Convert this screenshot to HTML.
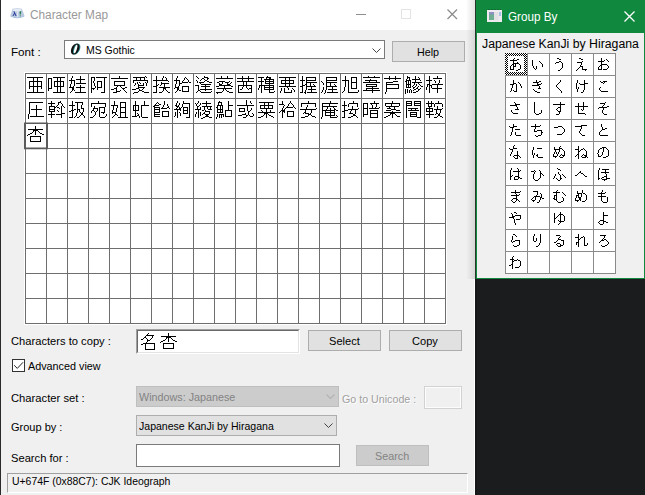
<!DOCTYPE html>
<html><head><meta charset="utf-8"><title>Character Map</title>
<style>
html,body{margin:0;padding:0}
body{width:645px;height:495px;overflow:hidden;background:#1b1c1e;position:relative;font-family:"Liberation Sans",sans-serif;font-size:11px;color:#000}
.abs{position:absolute}
.t{position:absolute;white-space:nowrap;line-height:14px;height:14px}
#main{position:absolute;left:0;top:0;width:475px;height:495px;background:#f0f0f0}
#mtitle{position:absolute;left:0;top:0;width:475px;height:30px;background:#fff}
#lb{position:absolute;left:0;top:0;width:1px;height:495px;background:#2a2a2a}
.btn{position:absolute;box-sizing:border-box;background:#e1e1e1;border:1px solid #adadad}
.btn.dis{background:#cccccc;border-color:#bfbfbf}
.combo{position:absolute;box-sizing:border-box;border:1px solid #7a7a7a;background:#fff}
#gb{position:absolute;left:475px;top:0;width:170px;height:279px;background:#10893e;border-left:1px solid #26382c;box-sizing:border-box}
#gbc{position:absolute;left:1px;top:33px;width:167px;height:245px;background:#f0f0f0}
</style></head><body>
<div id="main">
 <div id="mtitle"></div>
 <div id="lb"></div>
 <div class="abs" style="left:466px;top:0;width:9px;height:279px;background:linear-gradient(to right,rgba(0,0,0,0),rgba(0,0,0,0.11))"></div>
 <div class="abs" style="left:474px;top:279px;width:1px;height:216px;background:#fff"></div>
 <!-- title icon -->
 <svg class="abs" style="left:10px;top:8px" width="15" height="11" viewBox="0 0 15 11"><path d="M2.6 0.8Q7.2 -0.4 11.8 0.8L14.4 7.6Q7.2 11.4 0.4 7.6Z" fill="#b7c8df"/><path d="M3.4 1.2Q7.2 0.2 11 1.2L11.6 3Q7.2 4.2 2.8 3Z" fill="#e4ebf4"/><path d="M0.4 7.6Q7.2 11.4 14.4 7.6L14.2 8.6Q7.2 12 0.6 8.6Z" fill="#8fb0d6"/><path d="M3.4 3.2L4.4 3.2L6.6 8L5.5 8L4.6 6L3.5 8L2.5 8L4.1 4.9Z" fill="#2b3a98"/><path d="M7 3.6H8.2V9H7Z" fill="#dfe7f1"/><path d="M9.6 3.4L11.4 3.2L10.6 6.6L9.8 6.8Z" fill="#1e7a40"/><path d="M9.9 7.4H10.9V8.3H9.9Z" fill="#1e7a40"/></svg>
 <div class="t" style="left:30.05px;top:8px;font-size:12px;color:#999;transform:scaleX(0.9829);transform-origin:0 0;">Character Map</div>
 <!-- caption buttons -->
 <svg class="abs" style="left:356px;top:14px" width="10" height="1"><rect width="10" height="1" fill="#8e8e8e"/></svg>
 <svg class="abs" style="left:401px;top:9px" width="10" height="10"><rect x="0.5" y="0.5" width="9" height="9" fill="none" stroke="#e3e3e3"/></svg>
 <svg class="abs" style="left:447px;top:9px" width="11" height="11" viewBox="0 0 11 11"><path d="M0.5 0.5L10 10M10 0.5L0.5 10" stroke="#8a8a8a" stroke-width="1.2" fill="none"/></svg>

 <div class="t" style="left:10.82px;top:45px;font-size:11px;color:#000;transform:scaleX(1.0585);transform-origin:0 0;">Font :</div>
 <div class="combo" style="left:64px;top:40px;width:321px;height:19px"></div>
 <svg class="abs" style="left:68px;top:42px" width="16" height="14" viewBox="0 0 16 14"><g transform="translate(9.2 0) skewX(-16)"><path d="M-3.1 7a4.0 5.6 0 1 0 8.0 0a4.0 5.6 0 1 0 -8.0 0ZM-0.7999999999999999 7a1.7 4.6 0 1 0 3.4 0a1.7 4.6 0 1 0 -3.4 0Z" fill="#2f8f8f" fill-rule="evenodd"/><path d="M-4.0 7a4.0 5.6 0 1 0 8.0 0a4.0 5.6 0 1 0 -8.0 0ZM-1.7 7a1.7 4.6 0 1 0 3.4 0a1.7 4.6 0 1 0 -3.4 0Z" fill="#111" fill-rule="evenodd"/></g></svg>
 <div class="t" style="left:85.81px;top:43px;font-size:11px;color:#000;transform:scaleX(0.9514);transform-origin:0 0;">MS Gothic</div>
 <svg class="abs" style="left:372px;top:48px" width="9" height="5" viewBox="0 0 9 5"><path d="M0.5 0.5L4.5 4.5L8.5 0.5" stroke="#444" stroke-width="1" fill="none"/></svg>
 <div class="btn" style="left:392px;top:41px;width:73px;height:21px"></div>
 <div class="t" style="left:416.69px;top:45px;font-size:11px;color:#000;transform:scaleX(0.9759);transform-origin:0 0;">Help</div>

<svg class="abs" style="left:25px;top:73px;overflow:visible" width="421" height="251" viewBox="0 0 421 251">
<rect x="-1" y="-1" width="423" height="253" fill="#fff"/>
<path d="M0.5 0V251M21.5 0V251M42.5 0V251M63.5 0V251M84.5 0V251M105.5 0V251M126.5 0V251M147.5 0V251M168.5 0V251M189.5 0V251M210.5 0V251M231.5 0V251M252.5 0V251M273.5 0V251M294.5 0V251M315.5 0V251M336.5 0V251M357.5 0V251M378.5 0V251M399.5 0V251M420.5 0V251M0 0.5H421M0 25.5H421M0 50.5H421M0 75.5H421M0 100.5H421M0 125.5H421M0 150.5H421M0 175.5H421M0 200.5H421M0 225.5H421M0 250.5H421" stroke="#6e6e6e" stroke-width="1" fill="none" shape-rendering="crispEdges"/>
<path d="M-1 49.6H23V76.2H-1Z M1 51V74.6H21V51Z" fill="#5a5a5a" fill-rule="evenodd"/>
<g fill="#000" shape-rendering="crispEdges">
<path d="M2 4h16v1h-16zM8 5h1v1h-1zM12 5h1v1h-1zM8 6h1v1h-1zM12 6h1v1h-1zM8 7h1v1h-1zM12 7h1v1h-1zM4 8h13v1h-13zM4 9h1v1h-1zM8 9h1v1h-1zM12 9h1v1h-1zM16 9h1v1h-1zM4 10h1v1h-1zM8 10h1v1h-1zM12 10h1v1h-1zM16 10h1v1h-1zM4 11h1v1h-1zM8 11h1v1h-1zM12 11h1v1h-1zM16 11h1v1h-1zM4 12h1v1h-1zM8 12h1v1h-1zM12 12h1v1h-1zM16 12h1v1h-1zM4 13h13v1h-13zM4 14h1v1h-1zM8 14h1v1h-1zM12 14h1v1h-1zM16 14h1v1h-1zM4 15h1v1h-1zM8 15h1v1h-1zM12 15h1v1h-1zM16 15h1v1h-1zM8 16h1v1h-1zM12 16h1v1h-1zM8 17h1v1h-1zM12 17h1v1h-1zM8 18h1v1h-1zM12 18h1v1h-1zM2 19h17v1h-17z"/>
<path d="M28 4h12v1h-12zM23 5h4v1h-4zM32 5h1v1h-1zM35 5h1v1h-1zM23 6h1v1h-1zM26 6h1v1h-1zM32 6h1v1h-1zM35 6h1v1h-1zM23 7h1v1h-1zM26 7h1v1h-1zM32 7h1v1h-1zM35 7h1v1h-1zM23 8h1v1h-1zM26 8h1v1h-1zM29 8h10v1h-10zM23 9h1v1h-1zM26 9h1v1h-1zM29 9h1v1h-1zM32 9h1v1h-1zM35 9h1v1h-1zM38 9h1v1h-1zM23 10h1v1h-1zM26 10h1v1h-1zM29 10h1v1h-1zM32 10h1v1h-1zM35 10h1v1h-1zM38 10h1v1h-1zM23 11h1v1h-1zM26 11h1v1h-1zM29 11h1v1h-1zM32 11h1v1h-1zM35 11h1v1h-1zM38 11h1v1h-1zM23 12h1v1h-1zM26 12h1v1h-1zM29 12h1v1h-1zM32 12h1v1h-1zM35 12h1v1h-1zM38 12h1v1h-1zM23 13h1v1h-1zM26 13h1v1h-1zM29 13h10v1h-10zM23 14h1v1h-1zM26 14h1v1h-1zM32 14h1v1h-1zM35 14h1v1h-1zM23 15h4v1h-4zM32 15h1v1h-1zM35 15h1v1h-1zM23 16h1v1h-1zM32 16h1v1h-1zM35 16h1v1h-1zM23 17h1v1h-1zM32 17h1v1h-1zM35 17h1v1h-1zM32 18h1v1h-1zM35 18h1v1h-1zM28 19h12v1h-12z"/>
<path d="M47 3h1v1h-1zM55 3h1v1h-1zM47 4h1v1h-1zM55 4h1v1h-1zM46 5h1v1h-1zM55 5h1v1h-1zM46 6h1v1h-1zM51 6h9v1h-9zM44 7h6v1h-6zM55 7h1v1h-1zM46 8h1v1h-1zM49 8h1v1h-1zM55 8h1v1h-1zM46 9h1v1h-1zM49 9h1v1h-1zM55 9h1v1h-1zM46 10h1v1h-1zM49 10h1v1h-1zM51 10h10v1h-10zM45 11h1v1h-1zM49 11h1v1h-1zM45 12h1v1h-1zM49 12h1v1h-1zM55 12h1v1h-1zM45 13h1v1h-1zM48 13h1v1h-1zM55 13h1v1h-1zM44 14h5v1h-5zM51 14h9v1h-9zM47 15h2v1h-2zM55 15h1v1h-1zM47 16h2v1h-2zM55 16h1v1h-1zM47 17h1v1h-1zM49 17h1v1h-1zM55 17h1v1h-1zM46 18h1v1h-1zM55 18h1v1h-1zM45 19h1v1h-1zM50 19h11v1h-11z"/>
<path d="M66 4h4v1h-4zM71 4h11v1h-11zM66 5h1v1h-1zM69 5h1v1h-1zM79 5h1v1h-1zM66 6h1v1h-1zM69 6h1v1h-1zM79 6h1v1h-1zM66 7h1v1h-1zM69 7h1v1h-1zM79 7h1v1h-1zM66 8h1v1h-1zM68 8h1v1h-1zM72 8h5v1h-5zM79 8h1v1h-1zM66 9h1v1h-1zM68 9h1v1h-1zM72 9h1v1h-1zM76 9h1v1h-1zM79 9h1v1h-1zM66 10h1v1h-1zM69 10h1v1h-1zM72 10h1v1h-1zM76 10h1v1h-1zM79 10h1v1h-1zM66 11h1v1h-1zM69 11h1v1h-1zM72 11h1v1h-1zM76 11h1v1h-1zM79 11h1v1h-1zM66 12h1v1h-1zM69 12h1v1h-1zM72 12h1v1h-1zM76 12h1v1h-1zM79 12h1v1h-1zM66 13h1v1h-1zM70 13h1v1h-1zM72 13h1v1h-1zM76 13h1v1h-1zM79 13h1v1h-1zM66 14h1v1h-1zM70 14h1v1h-1zM72 14h5v1h-5zM79 14h1v1h-1zM66 15h4v1h-4zM72 15h1v1h-1zM79 15h1v1h-1zM66 16h1v1h-1zM68 16h1v1h-1zM72 16h1v1h-1zM79 16h1v1h-1zM66 17h1v1h-1zM79 17h1v1h-1zM66 18h1v1h-1zM79 18h1v1h-1zM66 19h1v1h-1zM76 19h4v1h-4z"/>
<path d="M94 3h1v1h-1zM94 4h1v1h-1zM86 5h17v1h-17zM89 8h11v1h-11zM89 9h1v1h-1zM99 9h1v1h-1zM89 10h1v1h-1zM99 10h1v1h-1zM89 11h1v1h-1zM99 11h1v1h-1zM89 12h11v1h-11zM92 13h1v1h-1zM95 13h1v1h-1zM91 14h1v1h-1zM96 14h1v1h-1zM100 14h2v1h-2zM89 15h3v1h-3zM97 15h3v1h-3zM86 16h3v1h-3zM91 16h1v1h-1zM98 16h1v1h-1zM91 17h1v1h-1zM95 17h1v1h-1zM99 17h1v1h-1zM91 18h4v1h-4zM100 18h1v1h-1zM88 19h4v1h-4zM101 19h1v1h-1z"/>
<path d="M120 3h1v1h-1zM108 4h12v1h-12zM121 4h1v1h-1zM111 5h1v1h-1zM115 5h1v1h-1zM119 5h1v1h-1zM111 6h1v1h-1zM115 6h1v1h-1zM119 6h1v1h-1zM108 7h15v1h-15zM108 8h1v1h-1zM122 8h1v1h-1zM108 9h1v1h-1zM112 9h1v1h-1zM114 9h1v1h-1zM120 9h1v1h-1zM122 9h1v1h-1zM110 10h1v1h-1zM112 10h1v1h-1zM115 10h1v1h-1zM118 10h1v1h-1zM121 10h1v1h-1zM110 11h1v1h-1zM113 11h1v1h-1zM118 11h1v1h-1zM121 11h1v1h-1zM109 12h1v1h-1zM113 12h6v1h-6zM121 12h1v1h-1zM113 13h1v1h-1zM113 14h7v1h-7zM111 15h3v1h-3zM118 15h1v1h-1zM107 16h4v1h-4zM114 16h1v1h-1zM117 16h1v1h-1zM114 17h3v1h-3zM113 18h1v1h-1zM117 18h2v1h-2zM109 19h4v1h-4zM119 19h5v1h-5zM108 20h1v1h-1z"/>
<path d="M131 3h1v1h-1zM138 3h1v1h-1zM131 4h1v1h-1zM138 4h1v1h-1zM140 4h1v1h-1zM131 5h1v1h-1zM137 5h1v1h-1zM141 5h1v1h-1zM131 6h1v1h-1zM137 6h1v1h-1zM141 6h1v1h-1zM128 7h15v1h-15zM131 8h1v1h-1zM143 8h1v1h-1zM131 9h1v1h-1zM136 9h1v1h-1zM131 10h1v1h-1zM136 10h8v1h-8zM131 11h1v1h-1zM133 11h1v1h-1zM136 11h1v1h-1zM139 11h1v1h-1zM131 12h2v1h-2zM135 12h1v1h-1zM139 12h1v1h-1zM128 13h4v1h-4zM139 13h1v1h-1zM131 14h1v1h-1zM134 14h11v1h-11zM131 15h1v1h-1zM138 15h3v1h-3zM131 16h1v1h-1zM138 16h1v1h-1zM140 16h1v1h-1zM131 17h1v1h-1zM138 17h1v1h-1zM141 17h1v1h-1zM131 18h1v1h-1zM137 18h1v1h-1zM142 18h1v1h-1zM128 19h4v1h-4zM134 19h3v1h-3zM143 19h2v1h-2z"/>
<path d="M152 3h1v1h-1zM152 4h1v1h-1zM160 4h1v1h-1zM151 5h1v1h-1zM159 5h1v1h-1zM161 5h1v1h-1zM151 6h1v1h-1zM159 6h1v1h-1zM162 6h1v1h-1zM149 7h6v1h-6zM158 7h1v1h-1zM163 7h1v1h-1zM151 8h1v1h-1zM154 8h1v1h-1zM157 8h1v1h-1zM163 8h1v1h-1zM151 9h1v1h-1zM154 9h1v1h-1zM157 9h6v1h-6zM164 9h2v1h-2zM151 10h1v1h-1zM154 10h3v1h-3zM150 11h1v1h-1zM154 11h1v1h-1zM150 12h1v1h-1zM154 12h1v1h-1zM150 13h1v1h-1zM153 13h1v1h-1zM157 13h7v1h-7zM150 14h4v1h-4zM157 14h1v1h-1zM163 14h1v1h-1zM149 15h1v1h-1zM152 15h2v1h-2zM157 15h1v1h-1zM163 15h1v1h-1zM152 16h2v1h-2zM157 16h1v1h-1zM163 16h1v1h-1zM152 17h1v1h-1zM154 17h2v1h-2zM157 17h1v1h-1zM163 17h1v1h-1zM151 18h1v1h-1zM157 18h7v1h-7zM150 19h1v1h-1z"/>
<path d="M171 3h1v1h-1zM179 3h1v1h-1zM172 4h1v1h-1zM179 4h4v1h-4zM173 5h1v1h-1zM177 5h2v1h-2zM182 5h2v1h-2zM176 6h1v1h-1zM179 6h1v1h-1zM182 6h1v1h-1zM171 7h1v1h-1zM175 7h1v1h-1zM180 7h2v1h-2zM172 8h1v1h-1zM179 8h1v1h-1zM182 8h2v1h-2zM172 9h1v1h-1zM174 9h5v1h-5zM184 9h3v1h-3zM175 10h1v1h-1zM176 11h10v1h-10zM170 12h4v1h-4zM180 12h1v1h-1zM173 13h1v1h-1zM176 13h9v1h-9zM173 14h1v1h-1zM180 14h1v1h-1zM173 15h1v1h-1zM180 15h1v1h-1zM173 16h1v1h-1zM175 16h12v1h-12zM173 17h2v1h-2zM180 17h1v1h-1zM172 18h1v1h-1zM175 18h1v1h-1zM186 18h1v1h-1zM171 19h1v1h-1zM176 19h10v1h-10z"/>
<path d="M196 3h1v1h-1zM202 3h1v1h-1zM196 4h1v1h-1zM202 4h1v1h-1zM191 5h17v1h-17zM194 8h6v1h-6zM204 8h1v1h-1zM192 9h2v1h-2zM197 9h1v1h-1zM200 9h4v1h-4zM206 9h1v1h-1zM194 10h1v1h-1zM197 10h1v1h-1zM202 10h1v1h-1zM205 10h1v1h-1zM194 11h3v1h-3zM202 11h3v1h-3zM194 12h12v1h-12zM191 13h3v1h-3zM199 13h1v1h-1zM206 13h2v1h-2zM199 14h1v1h-1zM192 15h15v1h-15zM198 16h1v1h-1zM200 16h1v1h-1zM198 17h1v1h-1zM201 17h1v1h-1zM197 18h1v1h-1zM202 18h2v1h-2zM191 19h6v1h-6zM204 19h4v1h-4zM192 20h1v1h-1z"/>
<path d="M217 3h1v1h-1zM223 3h1v1h-1zM217 4h1v1h-1zM223 4h1v1h-1zM212 5h17v1h-17zM217 6h1v1h-1zM223 6h1v1h-1zM217 7h1v1h-1zM223 7h1v1h-1zM212 8h17v1h-17zM218 9h1v1h-1zM221 9h1v1h-1zM218 10h1v1h-1zM221 10h1v1h-1zM218 11h1v1h-1zM221 11h1v1h-1zM213 12h14v1h-14zM213 13h1v1h-1zM218 13h1v1h-1zM221 13h1v1h-1zM226 13h1v1h-1zM213 14h1v1h-1zM217 14h1v1h-1zM221 14h1v1h-1zM226 14h1v1h-1zM213 15h1v1h-1zM217 15h1v1h-1zM222 15h1v1h-1zM224 15h3v1h-3zM213 16h1v1h-1zM215 16h2v1h-2zM223 16h1v1h-1zM226 16h1v1h-1zM213 17h1v1h-1zM226 17h1v1h-1zM213 18h1v1h-1zM226 18h1v1h-1zM213 19h14v1h-14z"/>
<path d="M242 3h1v1h-1zM233 4h6v1h-6zM241 4h5v1h-5zM236 5h1v1h-1zM241 5h1v1h-1zM244 5h2v1h-2zM236 6h1v1h-1zM239 6h10v1h-10zM236 7h1v1h-1zM240 7h1v1h-1zM244 7h1v1h-1zM248 7h1v1h-1zM233 8h6v1h-6zM240 8h9v1h-9zM236 9h1v1h-1zM240 9h1v1h-1zM244 9h1v1h-1zM248 9h1v1h-1zM236 10h1v1h-1zM240 10h9v1h-9zM236 11h1v1h-1zM244 11h1v1h-1zM234 12h15v1h-15zM234 13h1v1h-1zM236 13h1v1h-1zM239 13h1v1h-1zM244 13h1v1h-1zM248 13h1v1h-1zM234 14h1v1h-1zM236 14h1v1h-1zM239 14h10v1h-10zM233 15h1v1h-1zM236 15h1v1h-1zM239 15h1v1h-1zM244 15h1v1h-1zM248 15h1v1h-1zM233 16h1v1h-1zM236 16h1v1h-1zM239 16h10v1h-10zM236 17h1v1h-1zM244 17h1v1h-1zM236 18h1v1h-1zM244 18h1v1h-1zM249 18h1v1h-1zM236 19h1v1h-1zM244 19h5v1h-5z"/>
<path d="M254 4h17v1h-17zM260 5h1v1h-1zM264 5h1v1h-1zM260 6h1v1h-1zM264 6h1v1h-1zM256 7h13v1h-13zM256 8h1v1h-1zM260 8h1v1h-1zM264 8h1v1h-1zM268 8h1v1h-1zM256 9h1v1h-1zM260 9h1v1h-1zM264 9h1v1h-1zM268 9h1v1h-1zM256 10h13v1h-13zM260 11h1v1h-1zM264 11h1v1h-1zM260 12h1v1h-1zM264 12h1v1h-1zM254 13h17v1h-17zM262 14h1v1h-1zM256 15h1v1h-1zM259 15h1v1h-1zM263 15h1v1h-1zM267 15h1v1h-1zM256 16h1v1h-1zM259 16h1v1h-1zM263 16h1v1h-1zM268 16h1v1h-1zM256 17h1v1h-1zM259 17h1v1h-1zM266 17h1v1h-1zM269 17h1v1h-1zM255 18h1v1h-1zM259 18h1v1h-1zM266 18h1v1h-1zM269 18h1v1h-1zM255 19h1v1h-1zM259 19h8v1h-8z"/>
<path d="M277 3h1v1h-1zM277 4h1v1h-1zM281 4h10v1h-10zM277 5h1v1h-1zM281 5h1v1h-1zM290 5h1v1h-1zM277 6h1v1h-1zM281 6h1v1h-1zM290 6h1v1h-1zM275 7h5v1h-5zM281 7h10v1h-10zM277 8h1v1h-1zM281 8h1v1h-1zM277 9h1v1h-1zM281 9h11v1h-11zM277 10h1v1h-1zM281 10h1v1h-1zM285 10h1v1h-1zM277 11h1v1h-1zM280 11h2v1h-2zM285 11h1v1h-1zM288 11h1v1h-1zM277 12h3v1h-3zM281 12h1v1h-1zM285 12h1v1h-1zM289 12h1v1h-1zM275 13h3v1h-3zM281 13h10v1h-10zM277 14h1v1h-1zM281 14h1v1h-1zM286 14h1v1h-1zM277 15h1v1h-1zM281 15h1v1h-1zM286 15h1v1h-1zM277 16h1v1h-1zM281 16h1v1h-1zM283 16h8v1h-8zM277 17h1v1h-1zM280 17h1v1h-1zM286 17h1v1h-1zM277 18h1v1h-1zM280 18h1v1h-1zM286 18h1v1h-1zM275 19h3v1h-3zM279 19h2v1h-2zM282 19h10v1h-10zM280 20h1v1h-1z"/>
<path d="M301 4h11v1h-11zM301 5h1v1h-1zM311 5h1v1h-1zM301 6h1v1h-1zM311 6h1v1h-1zM301 7h11v1h-11zM296 8h1v1h-1zM301 8h1v1h-1zM297 9h1v1h-1zM301 9h11v1h-11zM298 10h1v1h-1zM301 10h1v1h-1zM305 10h1v1h-1zM298 11h1v1h-1zM301 11h1v1h-1zM305 11h1v1h-1zM309 11h1v1h-1zM301 12h1v1h-1zM305 12h1v1h-1zM310 12h1v1h-1zM301 13h11v1h-11zM298 14h1v1h-1zM301 14h1v1h-1zM307 14h1v1h-1zM298 15h1v1h-1zM301 15h1v1h-1zM307 15h1v1h-1zM298 16h1v1h-1zM301 16h1v1h-1zM303 16h9v1h-9zM297 17h1v1h-1zM300 17h1v1h-1zM307 17h1v1h-1zM297 18h1v1h-1zM300 18h1v1h-1zM307 18h1v1h-1zM296 19h1v1h-1zM300 19h1v1h-1zM302 19h11v1h-11zM299 20h1v1h-1z"/>
<path d="M320 3h1v1h-1zM320 4h1v1h-1zM326 4h6v1h-6zM320 5h1v1h-1zM326 5h1v1h-1zM331 5h1v1h-1zM320 6h1v1h-1zM326 6h1v1h-1zM331 6h1v1h-1zM317 7h7v1h-7zM326 7h1v1h-1zM331 7h1v1h-1zM320 8h1v1h-1zM323 8h1v1h-1zM326 8h1v1h-1zM331 8h1v1h-1zM320 9h1v1h-1zM323 9h1v1h-1zM326 9h6v1h-6zM320 10h1v1h-1zM323 10h1v1h-1zM326 10h1v1h-1zM331 10h1v1h-1zM320 11h1v1h-1zM323 11h1v1h-1zM326 11h1v1h-1zM331 11h1v1h-1zM320 12h1v1h-1zM323 12h1v1h-1zM326 12h1v1h-1zM331 12h1v1h-1zM320 13h1v1h-1zM323 13h1v1h-1zM326 13h1v1h-1zM331 13h1v1h-1zM319 14h1v1h-1zM323 14h1v1h-1zM326 14h1v1h-1zM331 14h1v1h-1zM319 15h1v1h-1zM323 15h1v1h-1zM326 15h6v1h-6zM319 16h1v1h-1zM323 16h1v1h-1zM319 17h1v1h-1zM323 17h1v1h-1zM333 17h1v1h-1zM318 18h1v1h-1zM323 18h1v1h-1zM333 18h1v1h-1zM317 19h1v1h-1zM323 19h10v1h-10z"/>
<path d="M343 3h1v1h-1zM349 3h1v1h-1zM338 4h17v1h-17zM345 6h1v1h-1zM340 7h12v1h-12zM344 8h1v1h-1zM351 8h1v1h-1zM338 9h17v1h-17zM341 11h11v1h-11zM341 12h1v1h-1zM351 12h1v1h-1zM341 13h11v1h-11zM347 14h1v1h-1zM341 15h13v1h-13zM341 16h1v1h-1zM347 16h1v1h-1zM338 17h17v1h-17zM347 18h1v1h-1zM347 19h1v1h-1z"/>
<path d="M364 3h1v1h-1zM370 3h1v1h-1zM364 4h1v1h-1zM370 4h1v1h-1zM359 5h17v1h-17zM364 6h1v1h-1zM370 6h1v1h-1zM368 8h5v1h-5zM361 9h7v1h-7zM361 10h1v1h-1zM361 11h13v1h-13zM361 12h1v1h-1zM373 12h1v1h-1zM361 13h1v1h-1zM373 13h1v1h-1zM361 14h1v1h-1zM373 14h1v1h-1zM361 15h13v1h-13zM361 16h1v1h-1zM361 17h1v1h-1zM361 18h1v1h-1zM360 19h1v1h-1zM360 20h1v1h-1z"/>
<path d="M382 3h1v1h-1zM390 3h1v1h-1zM382 4h3v1h-3zM390 4h1v1h-1zM393 4h1v1h-1zM382 5h1v1h-1zM384 5h1v1h-1zM390 5h1v1h-1zM394 5h1v1h-1zM381 6h1v1h-1zM384 6h1v1h-1zM387 6h8v1h-8zM381 7h5v1h-5zM390 7h1v1h-1zM395 7h1v1h-1zM380 8h2v1h-2zM383 8h1v1h-1zM385 8h1v1h-1zM390 8h1v1h-1zM381 9h1v1h-1zM383 9h1v1h-1zM385 9h1v1h-1zM387 9h10v1h-10zM381 10h1v1h-1zM383 10h1v1h-1zM385 10h1v1h-1zM389 10h1v1h-1zM393 10h1v1h-1zM381 11h5v1h-5zM389 11h1v1h-1zM391 11h1v1h-1zM394 11h1v1h-1zM381 12h1v1h-1zM383 12h1v1h-1zM385 12h1v1h-1zM388 12h1v1h-1zM391 12h1v1h-1zM395 12h1v1h-1zM381 13h1v1h-1zM383 13h1v1h-1zM385 13h1v1h-1zM387 13h1v1h-1zM390 13h1v1h-1zM393 13h1v1h-1zM396 13h2v1h-2zM381 14h5v1h-5zM388 14h2v1h-2zM392 14h1v1h-1zM388 15h1v1h-1zM391 15h2v1h-2zM395 15h1v1h-1zM380 16h1v1h-1zM382 16h1v1h-1zM385 16h1v1h-1zM389 16h2v1h-2zM393 16h2v1h-2zM380 17h1v1h-1zM382 17h1v1h-1zM384 17h1v1h-1zM386 17h1v1h-1zM388 17h1v1h-1zM393 17h1v1h-1zM380 18h1v1h-1zM382 18h1v1h-1zM384 18h1v1h-1zM386 18h1v1h-1zM391 18h2v1h-2zM380 19h1v1h-1zM382 19h1v1h-1zM384 19h1v1h-1zM386 19h1v1h-1zM388 19h3v1h-3zM380 20h1v1h-1z"/>
<path d="M404 3h1v1h-1zM412 3h1v1h-1zM404 4h1v1h-1zM412 4h1v1h-1zM404 5h1v1h-1zM408 5h9v1h-9zM404 6h1v1h-1zM401 7h6v1h-6zM409 7h1v1h-1zM414 7h1v1h-1zM404 8h1v1h-1zM410 8h1v1h-1zM414 8h1v1h-1zM404 9h1v1h-1zM410 9h1v1h-1zM414 9h1v1h-1zM404 10h1v1h-1zM413 10h1v1h-1zM402 11h3v1h-3zM407 11h11v1h-11zM402 12h1v1h-1zM404 12h3v1h-3zM412 12h1v1h-1zM402 13h1v1h-1zM404 13h1v1h-1zM406 13h1v1h-1zM412 13h1v1h-1zM401 14h1v1h-1zM404 14h1v1h-1zM406 14h1v1h-1zM412 14h1v1h-1zM401 15h1v1h-1zM404 15h1v1h-1zM407 15h10v1h-10zM401 16h1v1h-1zM404 16h1v1h-1zM412 16h1v1h-1zM404 17h1v1h-1zM412 17h1v1h-1zM404 18h1v1h-1zM412 18h1v1h-1zM404 19h1v1h-1zM412 19h1v1h-1z"/>
<path d="M4 29h14v1h-14zM4 30h1v1h-1zM4 31h1v1h-1zM4 32h1v1h-1zM11 32h1v1h-1zM4 33h1v1h-1zM11 33h1v1h-1zM4 34h1v1h-1zM11 34h1v1h-1zM4 35h1v1h-1zM11 35h1v1h-1zM4 36h1v1h-1zM6 36h11v1h-11zM4 37h1v1h-1zM11 37h1v1h-1zM4 38h1v1h-1zM11 38h1v1h-1zM4 39h1v1h-1zM11 39h1v1h-1zM4 40h1v1h-1zM11 40h1v1h-1zM3 41h1v1h-1zM11 41h1v1h-1zM3 42h1v1h-1zM11 42h1v1h-1zM3 43h1v1h-1zM5 43h14v1h-14zM3 44h1v1h-1zM3 45h1v1h-1z"/>
<path d="M26 28h1v1h-1zM35 28h1v1h-1zM26 29h1v1h-1zM33 29h3v1h-3zM23 30h7v1h-7zM33 30h1v1h-1zM36 30h1v1h-1zM26 31h1v1h-1zM33 31h1v1h-1zM37 31h1v1h-1zM26 32h1v1h-1zM32 32h1v1h-1zM37 32h1v1h-1zM24 33h6v1h-6zM31 33h1v1h-1zM36 33h1v1h-1zM38 33h1v1h-1zM24 34h1v1h-1zM29 34h2v1h-2zM32 34h2v1h-2zM36 34h1v1h-1zM39 34h1v1h-1zM24 35h1v1h-1zM29 35h1v1h-1zM34 35h1v1h-1zM36 35h1v1h-1zM24 36h6v1h-6zM36 36h1v1h-1zM24 37h1v1h-1zM29 37h1v1h-1zM32 37h1v1h-1zM36 37h1v1h-1zM24 38h6v1h-6zM33 38h1v1h-1zM36 38h1v1h-1zM26 39h1v1h-1zM36 39h1v1h-1zM26 40h1v1h-1zM36 40h4v1h-4zM23 41h7v1h-7zM31 41h6v1h-6zM26 42h1v1h-1zM36 42h1v1h-1zM26 43h1v1h-1zM36 43h1v1h-1zM26 44h1v1h-1zM36 44h1v1h-1z"/>
<path d="M47 28h1v1h-1zM47 29h1v1h-1zM50 29h8v1h-8zM47 30h1v1h-1zM52 30h1v1h-1zM57 30h1v1h-1zM47 31h1v1h-1zM52 31h1v1h-1zM57 31h1v1h-1zM44 32h6v1h-6zM52 32h1v1h-1zM56 32h1v1h-1zM47 33h1v1h-1zM52 33h1v1h-1zM56 33h1v1h-1zM47 34h1v1h-1zM52 34h1v1h-1zM56 34h1v1h-1zM47 35h1v1h-1zM52 35h1v1h-1zM56 35h3v1h-3zM47 36h1v1h-1zM49 36h2v1h-2zM52 36h3v1h-3zM58 36h1v1h-1zM46 37h3v1h-3zM52 37h1v1h-1zM54 37h1v1h-1zM58 37h1v1h-1zM44 38h2v1h-2zM47 38h1v1h-1zM52 38h1v1h-1zM54 38h1v1h-1zM58 38h1v1h-1zM47 39h1v1h-1zM52 39h1v1h-1zM55 39h1v1h-1zM57 39h1v1h-1zM47 40h1v1h-1zM51 40h1v1h-1zM56 40h2v1h-2zM47 41h1v1h-1zM51 41h1v1h-1zM56 41h2v1h-2zM47 42h1v1h-1zM51 42h1v1h-1zM55 42h1v1h-1zM58 42h1v1h-1zM47 43h1v1h-1zM50 43h1v1h-1zM54 43h1v1h-1zM59 43h1v1h-1zM44 44h4v1h-4zM49 44h1v1h-1zM52 44h2v1h-2zM59 44h1v1h-1z"/>
<path d="M73 28h1v1h-1zM73 29h1v1h-1zM66 30h15v1h-15zM66 31h1v1h-1zM80 31h1v1h-1zM66 32h1v1h-1zM80 32h1v1h-1zM66 33h1v1h-1zM69 33h1v1h-1zM80 33h1v1h-1zM69 34h1v1h-1zM74 34h6v1h-6zM68 35h5v1h-5zM74 35h1v1h-1zM79 35h1v1h-1zM68 36h1v1h-1zM72 36h1v1h-1zM74 36h1v1h-1zM79 36h1v1h-1zM67 37h2v1h-2zM72 37h1v1h-1zM74 37h1v1h-1zM79 37h1v1h-1zM66 38h1v1h-1zM69 38h1v1h-1zM71 38h1v1h-1zM74 38h1v1h-1zM79 38h1v1h-1zM66 39h1v1h-1zM70 39h1v1h-1zM74 39h1v1h-1zM76 39h4v1h-4zM70 40h1v1h-1zM74 40h1v1h-1zM78 40h1v1h-1zM70 41h1v1h-1zM74 41h1v1h-1zM81 41h1v1h-1zM69 42h1v1h-1zM74 42h1v1h-1zM81 42h1v1h-1zM68 43h1v1h-1zM74 43h1v1h-1zM80 43h1v1h-1zM65 44h3v1h-3zM75 44h5v1h-5z"/>
<path d="M89 28h1v1h-1zM89 29h1v1h-1zM95 29h6v1h-6zM89 30h1v1h-1zM95 30h1v1h-1zM100 30h1v1h-1zM89 31h1v1h-1zM95 31h1v1h-1zM100 31h1v1h-1zM86 32h7v1h-7zM95 32h1v1h-1zM100 32h1v1h-1zM88 33h1v1h-1zM92 33h1v1h-1zM95 33h1v1h-1zM100 33h1v1h-1zM88 34h1v1h-1zM92 34h1v1h-1zM95 34h6v1h-6zM88 35h1v1h-1zM91 35h1v1h-1zM95 35h1v1h-1zM100 35h1v1h-1zM88 36h1v1h-1zM91 36h1v1h-1zM95 36h1v1h-1zM100 36h1v1h-1zM87 37h1v1h-1zM91 37h1v1h-1zM95 37h1v1h-1zM100 37h1v1h-1zM87 38h1v1h-1zM91 38h1v1h-1zM95 38h1v1h-1zM100 38h1v1h-1zM87 39h4v1h-4zM95 39h6v1h-6zM87 40h1v1h-1zM90 40h1v1h-1zM95 40h1v1h-1zM100 40h1v1h-1zM90 41h2v1h-2zM95 41h1v1h-1zM100 41h1v1h-1zM89 42h1v1h-1zM92 42h1v1h-1zM95 42h1v1h-1zM100 42h1v1h-1zM88 43h1v1h-1zM95 43h1v1h-1zM100 43h1v1h-1zM87 44h1v1h-1zM93 44h10v1h-10z"/>
<path d="M110 28h1v1h-1zM119 28h1v1h-1zM110 29h1v1h-1zM119 29h1v1h-1zM110 30h1v1h-1zM119 30h1v1h-1zM110 31h1v1h-1zM119 31h1v1h-1zM108 32h6v1h-6zM116 32h8v1h-8zM108 33h1v1h-1zM110 33h1v1h-1zM113 33h1v1h-1zM116 33h1v1h-1zM108 34h1v1h-1zM110 34h1v1h-1zM113 34h1v1h-1zM116 34h1v1h-1zM108 35h1v1h-1zM110 35h1v1h-1zM113 35h1v1h-1zM116 35h1v1h-1zM108 36h1v1h-1zM110 36h1v1h-1zM113 36h1v1h-1zM116 36h1v1h-1zM108 37h6v1h-6zM116 37h1v1h-1zM110 38h1v1h-1zM116 38h1v1h-1zM110 39h1v1h-1zM116 39h1v1h-1zM110 40h1v1h-1zM112 40h1v1h-1zM116 40h1v1h-1zM110 41h1v1h-1zM113 41h1v1h-1zM116 41h1v1h-1zM110 42h1v1h-1zM112 42h2v1h-2zM116 42h1v1h-1zM107 43h5v1h-5zM114 43h1v1h-1zM116 43h1v1h-1zM114 44h1v1h-1zM117 44h6v1h-6z"/>
<path d="M139 28h1v1h-1zM132 29h1v1h-1zM139 29h1v1h-1zM131 30h1v1h-1zM133 30h1v1h-1zM139 30h1v1h-1zM130 31h1v1h-1zM134 31h2v1h-2zM139 31h1v1h-1zM142 31h1v1h-1zM129 32h5v1h-5zM138 32h1v1h-1zM142 32h1v1h-1zM128 33h2v1h-2zM138 33h1v1h-1zM143 33h1v1h-1zM129 34h6v1h-6zM137 34h1v1h-1zM142 34h2v1h-2zM129 35h1v1h-1zM134 35h1v1h-1zM136 35h6v1h-6zM144 35h1v1h-1zM129 36h6v1h-6zM129 37h1v1h-1zM134 37h1v1h-1zM129 38h1v1h-1zM134 38h1v1h-1zM137 38h7v1h-7zM129 39h6v1h-6zM137 39h1v1h-1zM143 39h1v1h-1zM129 40h1v1h-1zM137 40h1v1h-1zM143 40h1v1h-1zM129 41h6v1h-6zM137 41h1v1h-1zM143 41h1v1h-1zM129 42h1v1h-1zM137 42h1v1h-1zM143 42h1v1h-1zM129 43h6v1h-6zM137 43h7v1h-7z"/>
<path d="M152 28h1v1h-1zM158 28h1v1h-1zM152 29h1v1h-1zM158 29h1v1h-1zM151 30h1v1h-1zM154 30h1v1h-1zM158 30h7v1h-7zM151 31h1v1h-1zM154 31h1v1h-1zM157 31h1v1h-1zM164 31h1v1h-1zM150 32h2v1h-2zM153 32h1v1h-1zM157 32h1v1h-1zM164 32h1v1h-1zM151 33h3v1h-3zM157 33h1v1h-1zM164 33h1v1h-1zM152 34h1v1h-1zM154 34h1v1h-1zM156 34h1v1h-1zM158 34h5v1h-5zM164 34h1v1h-1zM151 35h1v1h-1zM154 35h2v1h-2zM158 35h1v1h-1zM162 35h1v1h-1zM164 35h1v1h-1zM149 36h7v1h-7zM158 36h1v1h-1zM162 36h1v1h-1zM164 36h1v1h-1zM152 37h1v1h-1zM155 37h1v1h-1zM158 37h5v1h-5zM164 37h1v1h-1zM152 38h1v1h-1zM158 38h1v1h-1zM162 38h1v1h-1zM164 38h1v1h-1zM150 39h1v1h-1zM152 39h1v1h-1zM154 39h1v1h-1zM158 39h1v1h-1zM162 39h1v1h-1zM164 39h1v1h-1zM150 40h1v1h-1zM152 40h1v1h-1zM155 40h1v1h-1zM158 40h5v1h-5zM164 40h1v1h-1zM150 41h1v1h-1zM152 41h1v1h-1zM155 41h1v1h-1zM164 41h1v1h-1zM150 42h1v1h-1zM152 42h1v1h-1zM155 42h1v1h-1zM164 42h1v1h-1zM149 43h1v1h-1zM152 43h1v1h-1zM164 43h1v1h-1zM152 44h1v1h-1zM161 44h4v1h-4z"/>
<path d="M173 28h1v1h-1zM181 28h1v1h-1zM173 29h1v1h-1zM181 29h1v1h-1zM170 30h1v1h-1zM172 30h1v1h-1zM175 30h1v1h-1zM177 30h9v1h-9zM171 31h1v1h-1zM175 31h1v1h-1zM181 31h1v1h-1zM171 32h1v1h-1zM174 32h1v1h-1zM181 32h1v1h-1zM172 33h2v1h-2zM177 33h10v1h-10zM172 34h1v1h-1zM175 34h1v1h-1zM179 34h1v1h-1zM182 34h1v1h-1zM185 34h1v1h-1zM172 35h1v1h-1zM175 35h1v1h-1zM179 35h1v1h-1zM182 35h1v1h-1zM185 35h1v1h-1zM170 36h6v1h-6zM179 36h1v1h-1zM183 36h4v1h-4zM173 37h1v1h-1zM177 37h2v1h-2zM180 37h1v1h-1zM173 38h1v1h-1zM180 38h5v1h-5zM171 39h1v1h-1zM173 39h1v1h-1zM175 39h1v1h-1zM179 39h1v1h-1zM184 39h1v1h-1zM171 40h1v1h-1zM173 40h1v1h-1zM175 40h1v1h-1zM178 40h2v1h-2zM184 40h1v1h-1zM170 41h1v1h-1zM173 41h1v1h-1zM175 41h1v1h-1zM177 41h1v1h-1zM180 41h4v1h-4zM170 42h1v1h-1zM173 42h1v1h-1zM175 42h1v1h-1zM181 42h2v1h-2zM170 43h1v1h-1zM173 43h1v1h-1zM180 43h4v1h-4zM173 44h1v1h-1zM178 44h2v1h-2zM184 44h3v1h-3zM176 45h2v1h-2z"/>
<path d="M194 28h1v1h-1zM203 28h1v1h-1zM193 29h4v1h-4zM203 29h1v1h-1zM193 30h1v1h-1zM196 30h1v1h-1zM203 30h1v1h-1zM193 31h1v1h-1zM196 31h1v1h-1zM203 31h1v1h-1zM192 32h6v1h-6zM203 32h5v1h-5zM192 33h1v1h-1zM195 33h1v1h-1zM197 33h1v1h-1zM203 33h1v1h-1zM191 34h2v1h-2zM195 34h1v1h-1zM197 34h1v1h-1zM203 34h1v1h-1zM192 35h1v1h-1zM195 35h1v1h-1zM197 35h1v1h-1zM203 35h1v1h-1zM192 36h6v1h-6zM203 36h1v1h-1zM192 37h1v1h-1zM195 37h1v1h-1zM197 37h1v1h-1zM200 37h7v1h-7zM192 38h1v1h-1zM195 38h1v1h-1zM197 38h1v1h-1zM200 38h1v1h-1zM206 38h1v1h-1zM192 39h6v1h-6zM200 39h1v1h-1zM206 39h1v1h-1zM200 40h1v1h-1zM206 40h1v1h-1zM192 41h1v1h-1zM194 41h5v1h-5zM200 41h1v1h-1zM206 41h1v1h-1zM192 42h1v1h-1zM194 42h1v1h-1zM196 42h1v1h-1zM198 42h1v1h-1zM200 42h1v1h-1zM206 42h1v1h-1zM192 43h1v1h-1zM194 43h1v1h-1zM196 43h1v1h-1zM198 43h1v1h-1zM200 43h7v1h-7zM191 44h1v1h-1zM194 44h1v1h-1zM196 44h1v1h-1zM191 45h1v1h-1z"/>
<path d="M221 27h1v1h-1zM221 28h1v1h-1zM225 28h1v1h-1zM221 29h1v1h-1zM225 29h1v1h-1zM221 30h1v1h-1zM226 30h1v1h-1zM221 31h1v1h-1zM212 32h17v1h-17zM222 33h1v1h-1zM222 34h1v1h-1zM214 35h6v1h-6zM222 35h1v1h-1zM226 35h1v1h-1zM214 36h1v1h-1zM219 36h1v1h-1zM222 36h1v1h-1zM226 36h1v1h-1zM214 37h1v1h-1zM219 37h1v1h-1zM222 37h1v1h-1zM225 37h1v1h-1zM214 38h6v1h-6zM223 38h2v1h-2zM223 39h1v1h-1zM220 40h1v1h-1zM223 40h1v1h-1zM227 40h1v1h-1zM217 41h4v1h-4zM223 41h1v1h-1zM228 41h1v1h-1zM213 42h4v1h-4zM221 42h2v1h-2zM224 42h1v1h-1zM228 42h1v1h-1zM221 43h1v1h-1zM225 43h3v1h-3zM218 44h3v1h-3z"/>
<path d="M234 29h15v1h-15zM239 30h1v1h-1zM243 30h1v1h-1zM239 31h1v1h-1zM243 31h1v1h-1zM235 32h13v1h-13zM235 33h1v1h-1zM239 33h1v1h-1zM243 33h1v1h-1zM247 33h1v1h-1zM235 34h1v1h-1zM239 34h1v1h-1zM243 34h1v1h-1zM247 34h1v1h-1zM235 35h13v1h-13zM241 36h1v1h-1zM236 37h1v1h-1zM241 37h1v1h-1zM245 37h1v1h-1zM237 38h1v1h-1zM241 38h1v1h-1zM245 38h1v1h-1zM233 39h17v1h-17zM239 40h4v1h-4zM239 41h1v1h-1zM241 41h1v1h-1zM243 41h1v1h-1zM238 42h1v1h-1zM241 42h1v1h-1zM244 42h2v1h-2zM236 43h2v1h-2zM241 43h1v1h-1zM246 43h2v1h-2zM233 44h3v1h-3zM241 44h1v1h-1zM248 44h1v1h-1z"/>
<path d="M257 28h1v1h-1zM265 28h1v1h-1zM257 29h1v1h-1zM265 29h1v1h-1zM257 30h1v1h-1zM264 30h1v1h-1zM266 30h1v1h-1zM254 31h5v1h-5zM263 31h1v1h-1zM267 31h1v1h-1zM259 32h1v1h-1zM263 32h1v1h-1zM268 32h1v1h-1zM258 33h1v1h-1zM262 33h1v1h-1zM268 33h1v1h-1zM258 34h1v1h-1zM261 34h7v1h-7zM269 34h1v1h-1zM257 35h1v1h-1zM260 35h1v1h-1zM270 35h1v1h-1zM257 36h1v1h-1zM259 36h1v1h-1zM256 37h4v1h-4zM255 38h1v1h-1zM257 38h3v1h-3zM262 38h7v1h-7zM254 39h1v1h-1zM257 39h1v1h-1zM259 39h1v1h-1zM262 39h1v1h-1zM268 39h1v1h-1zM257 40h1v1h-1zM262 40h1v1h-1zM268 40h1v1h-1zM257 41h1v1h-1zM262 41h1v1h-1zM268 41h1v1h-1zM257 42h1v1h-1zM262 42h1v1h-1zM268 42h1v1h-1zM257 43h1v1h-1zM262 43h7v1h-7zM257 44h1v1h-1z"/>
<path d="M283 28h1v1h-1zM283 29h1v1h-1zM276 30h15v1h-15zM276 31h1v1h-1zM290 31h1v1h-1zM276 32h1v1h-1zM282 32h1v1h-1zM290 32h1v1h-1zM276 33h1v1h-1zM282 33h1v1h-1zM290 33h1v1h-1zM281 34h1v1h-1zM281 35h1v1h-1zM291 35h1v1h-1zM275 36h16v1h-16zM280 37h1v1h-1zM286 37h1v1h-1zM280 38h1v1h-1zM286 38h1v1h-1zM279 39h2v1h-2zM286 39h1v1h-1zM278 40h1v1h-1zM280 40h4v1h-4zM285 40h1v1h-1zM283 41h3v1h-3zM283 42h1v1h-1zM286 42h1v1h-1zM280 43h3v1h-3zM287 43h3v1h-3zM276 44h4v1h-4zM290 44h1v1h-1z"/>
<path d="M305 28h1v1h-1zM305 29h1v1h-1zM297 30h16v1h-16zM297 31h1v1h-1zM304 31h1v1h-1zM297 32h1v1h-1zM304 32h1v1h-1zM297 33h15v1h-15zM297 34h1v1h-1zM302 34h1v1h-1zM308 34h1v1h-1zM297 35h1v1h-1zM302 35h1v1h-1zM305 35h1v1h-1zM309 35h1v1h-1zM297 36h1v1h-1zM301 36h1v1h-1zM305 36h1v1h-1zM309 36h2v1h-2zM297 37h13v1h-13zM311 37h2v1h-2zM297 38h1v1h-1zM300 38h1v1h-1zM305 38h1v1h-1zM309 38h1v1h-1zM297 39h1v1h-1zM300 39h10v1h-10zM297 40h1v1h-1zM300 40h1v1h-1zM305 40h1v1h-1zM309 40h1v1h-1zM297 41h1v1h-1zM300 41h1v1h-1zM305 41h1v1h-1zM309 41h1v1h-1zM297 42h1v1h-1zM300 42h10v1h-10zM311 42h1v1h-1zM297 43h1v1h-1zM305 43h1v1h-1zM312 43h1v1h-1zM296 44h1v1h-1zM305 44h7v1h-7zM296 45h1v1h-1z"/>
<path d="M319 28h1v1h-1zM328 28h1v1h-1zM319 29h1v1h-1zM328 29h1v1h-1zM319 30h1v1h-1zM324 30h9v1h-9zM319 31h1v1h-1zM323 31h1v1h-1zM332 31h1v1h-1zM317 32h5v1h-5zM323 32h1v1h-1zM332 32h1v1h-1zM319 33h1v1h-1zM323 33h1v1h-1zM327 33h1v1h-1zM332 33h1v1h-1zM319 34h1v1h-1zM327 34h1v1h-1zM319 35h1v1h-1zM327 35h1v1h-1zM333 35h1v1h-1zM319 36h1v1h-1zM323 36h10v1h-10zM319 37h4v1h-4zM326 37h1v1h-1zM330 37h1v1h-1zM317 38h3v1h-3zM325 38h1v1h-1zM330 38h1v1h-1zM319 39h1v1h-1zM325 39h1v1h-1zM330 39h1v1h-1zM319 40h1v1h-1zM324 40h4v1h-4zM330 40h1v1h-1zM319 41h1v1h-1zM328 41h2v1h-2zM319 42h1v1h-1zM328 42h3v1h-3zM319 43h1v1h-1zM326 43h2v1h-2zM331 43h1v1h-1zM317 44h3v1h-3zM323 44h3v1h-3zM332 44h1v1h-1z"/>
<path d="M349 28h1v1h-1zM349 29h1v1h-1zM338 30h5v1h-5zM345 30h9v1h-9zM338 31h1v1h-1zM342 31h1v1h-1zM346 31h1v1h-1zM351 31h1v1h-1zM338 32h1v1h-1zM342 32h1v1h-1zM347 32h1v1h-1zM351 32h1v1h-1zM338 33h1v1h-1zM342 33h1v1h-1zM347 33h1v1h-1zM351 33h1v1h-1zM338 34h1v1h-1zM342 34h1v1h-1zM347 34h1v1h-1zM350 34h1v1h-1zM354 34h1v1h-1zM338 35h5v1h-5zM344 35h10v1h-10zM338 36h1v1h-1zM342 36h1v1h-1zM338 37h1v1h-1zM342 37h1v1h-1zM345 37h8v1h-8zM338 38h1v1h-1zM342 38h1v1h-1zM345 38h1v1h-1zM352 38h1v1h-1zM338 39h1v1h-1zM342 39h1v1h-1zM345 39h1v1h-1zM352 39h1v1h-1zM338 40h1v1h-1zM342 40h1v1h-1zM345 40h8v1h-8zM338 41h5v1h-5zM345 41h1v1h-1zM352 41h1v1h-1zM338 42h1v1h-1zM345 42h1v1h-1zM352 42h1v1h-1zM338 43h1v1h-1zM345 43h1v1h-1zM352 43h1v1h-1zM345 44h8v1h-8z"/>
<path d="M367 28h1v1h-1zM367 29h1v1h-1zM360 30h15v1h-15zM360 31h1v1h-1zM366 31h1v1h-1zM374 31h1v1h-1zM360 32h1v1h-1zM366 32h1v1h-1zM374 32h1v1h-1zM361 33h13v1h-13zM364 34h1v1h-1zM369 34h1v1h-1zM362 35h4v1h-4zM369 35h1v1h-1zM366 36h5v1h-5zM361 37h5v1h-5zM371 37h4v1h-4zM367 38h1v1h-1zM359 39h17v1h-17zM365 40h5v1h-5zM365 41h1v1h-1zM367 41h1v1h-1zM370 41h1v1h-1zM363 42h2v1h-2zM367 42h1v1h-1zM371 42h1v1h-1zM361 43h2v1h-2zM367 43h1v1h-1zM372 43h3v1h-3zM359 44h2v1h-2zM367 44h1v1h-1z"/>
<path d="M381 28h6v1h-6zM389 28h7v1h-7zM381 29h1v1h-1zM386 29h1v1h-1zM389 29h1v1h-1zM395 29h1v1h-1zM381 30h6v1h-6zM389 30h7v1h-7zM381 31h1v1h-1zM386 31h1v1h-1zM389 31h1v1h-1zM395 31h1v1h-1zM381 32h6v1h-6zM389 32h7v1h-7zM381 33h1v1h-1zM395 33h1v1h-1zM381 34h1v1h-1zM395 34h1v1h-1zM381 35h1v1h-1zM383 35h10v1h-10zM395 35h1v1h-1zM381 36h1v1h-1zM386 36h1v1h-1zM390 36h1v1h-1zM395 36h1v1h-1zM381 37h1v1h-1zM383 37h11v1h-11zM395 37h1v1h-1zM381 38h1v1h-1zM395 38h1v1h-1zM381 39h1v1h-1zM385 39h7v1h-7zM395 39h1v1h-1zM381 40h1v1h-1zM385 40h1v1h-1zM391 40h1v1h-1zM395 40h1v1h-1zM381 41h1v1h-1zM385 41h7v1h-7zM395 41h1v1h-1zM381 42h1v1h-1zM385 42h1v1h-1zM391 42h1v1h-1zM395 42h1v1h-1zM381 43h1v1h-1zM385 43h7v1h-7zM395 43h1v1h-1zM381 44h1v1h-1zM392 44h4v1h-4z"/>
<path d="M403 28h1v1h-1zM406 28h1v1h-1zM413 28h1v1h-1zM403 29h1v1h-1zM406 29h1v1h-1zM413 29h1v1h-1zM401 30h8v1h-8zM410 30h7v1h-7zM403 31h1v1h-1zM406 31h1v1h-1zM409 31h1v1h-1zM417 31h1v1h-1zM403 32h1v1h-1zM406 32h1v1h-1zM409 32h1v1h-1zM417 32h1v1h-1zM403 33h4v1h-4zM409 33h1v1h-1zM412 33h1v1h-1zM417 33h1v1h-1zM404 34h1v1h-1zM412 34h1v1h-1zM401 35h7v1h-7zM412 35h1v1h-1zM417 35h1v1h-1zM401 36h1v1h-1zM404 36h1v1h-1zM407 36h1v1h-1zM409 36h8v1h-8zM401 37h1v1h-1zM404 37h1v1h-1zM407 37h1v1h-1zM411 37h1v1h-1zM415 37h1v1h-1zM401 38h7v1h-7zM411 38h1v1h-1zM415 38h1v1h-1zM404 39h1v1h-1zM411 39h1v1h-1zM415 39h1v1h-1zM404 40h1v1h-1zM411 40h2v1h-2zM414 40h1v1h-1zM401 41h8v1h-8zM410 41h1v1h-1zM413 41h2v1h-2zM404 42h1v1h-1zM413 42h2v1h-2zM404 43h1v1h-1zM412 43h1v1h-1zM415 43h2v1h-2zM404 44h1v1h-1zM409 44h3v1h-3zM417 44h1v1h-1z"/>
<path d="M10 53h1v1h-1zM10 54h1v1h-1zM10 55h1v1h-1zM3 56h15v1h-15zM8 57h5v1h-5zM8 58h1v1h-1zM10 58h1v1h-1zM13 58h1v1h-1zM7 59h1v1h-1zM10 59h1v1h-1zM14 59h1v1h-1zM5 60h2v1h-2zM10 60h1v1h-1zM15 60h2v1h-2zM3 61h2v1h-2zM10 61h1v1h-1zM17 61h2v1h-2zM2 62h1v1h-1zM5 63h11v1h-11zM5 64h1v1h-1zM15 64h1v1h-1zM5 65h1v1h-1zM15 65h1v1h-1zM5 66h1v1h-1zM15 66h1v1h-1zM5 67h1v1h-1zM15 67h1v1h-1zM5 68h11v1h-11z"/>
</g></svg>

 <div class="t" style="left:11.06px;top:334px;font-size:11px;color:#000;transform:scaleX(1.0149);transform-origin:0 0;">Characters to copy :</div>
 <div class="abs" style="left:136px;top:329px;width:164px;height:25px;box-sizing:border-box;background:#fff;border-top:1px solid #a0a0a0;border-left:1px solid #a0a0a0;border-right:1px solid #fff;border-bottom:1px solid #fff"><div style="position:absolute;left:0;top:0;right:0;bottom:0;border-top:1px solid #696969;border-left:1px solid #696969;border-right:1px solid #e3e3e3;border-bottom:1px solid #e3e3e3"></div></div>
<svg class="abs" style="left:138px;top:330px" width="60" height="25" viewBox="0 0 60 25"><g fill="#000" shape-rendering="crispEdges">
<path d="M10 3h1v1h-1zM9 4h1v1h-1zM8 5h8v1h-8zM7 6h1v1h-1zM14 6h1v1h-1zM6 7h2v1h-2zM14 7h1v1h-1zM5 8h1v1h-1zM8 8h1v1h-1zM13 8h1v1h-1zM3 9h2v1h-2zM9 9h1v1h-1zM12 9h1v1h-1zM9 10h3v1h-3zM9 11h1v1h-1zM8 12h1v1h-1zM5 13h12v1h-12zM3 14h2v1h-2zM7 14h1v1h-1zM16 14h1v1h-1zM7 15h1v1h-1zM16 15h1v1h-1zM7 16h1v1h-1zM16 16h1v1h-1zM7 17h1v1h-1zM16 17h1v1h-1zM7 18h1v1h-1zM16 18h1v1h-1zM7 19h10v1h-10z"/>
<path d="M30 3h1v1h-1zM30 4h1v1h-1zM30 5h1v1h-1zM23 6h15v1h-15zM28 7h5v1h-5zM28 8h1v1h-1zM30 8h1v1h-1zM33 8h1v1h-1zM27 9h1v1h-1zM30 9h1v1h-1zM34 9h1v1h-1zM25 10h2v1h-2zM30 10h1v1h-1zM35 10h2v1h-2zM23 11h2v1h-2zM30 11h1v1h-1zM37 11h2v1h-2zM22 12h1v1h-1zM25 13h11v1h-11zM25 14h1v1h-1zM35 14h1v1h-1zM25 15h1v1h-1zM35 15h1v1h-1zM25 16h1v1h-1zM35 16h1v1h-1zM25 17h1v1h-1zM35 17h1v1h-1zM25 18h11v1h-11z"/>
</g></svg>
 <div class="btn" style="left:308px;top:330px;width:73px;height:21px"></div>
 <div class="t" style="left:328.56px;top:334px;font-size:11px;color:#000;transform:scaleX(1.0071);transform-origin:0 0;">Select</div>
 <div class="btn" style="left:389px;top:330px;width:73px;height:21px"></div>
 <div class="t" style="left:411.56px;top:334px;font-size:11px;color:#000;transform:scaleX(1.0059);transform-origin:0 0;">Copy</div>

 <!-- checkbox -->
 <div class="abs" style="left:12px;top:359px;width:13px;height:13px;box-sizing:border-box;border:1px solid #333;background:#fff"></div>
 <svg class="abs" style="left:13px;top:360px" width="11" height="11" viewBox="0 0 11 11"><path d="M1.2 5.3L4.3 8.4L10 2.3" stroke="#222" stroke-width="1" fill="none"/></svg>
 <div class="t" style="left:27.88px;top:359px;font-size:11px;color:#000;transform:scaleX(0.9814);transform-origin:0 0;">Advanced view</div>

 <div class="t" style="left:11.06px;top:391px;font-size:11px;color:#000;transform:scaleX(1.0205);transform-origin:0 0;">Character set :</div>
 <div class="combo" style="left:136px;top:386px;width:203px;height:21px;background:#ccc;border-color:#bfbfbf"></div>
 <div class="t" style="left:139.48px;top:390px;font-size:11px;color:#838383;transform:scaleX(0.9785);transform-origin:0 0;">Windows: Japanese</div>
 <svg class="abs" style="left:326px;top:394px" width="9" height="5" viewBox="0 0 9 5"><path d="M0.5 0.5L4.5 4.5L8.5 0.5" stroke="#b4b4b4" stroke-width="1.2" fill="none"/></svg>
 <div class="t" style="left:342.11px;top:392px;font-size:11px;color:#a0a0a0;transform:scaleX(0.9708);transform-origin:0 0;text-shadow:1px 1px 0 #fff;">Go to Unicode :</div>
 <div class="abs" style="left:424px;top:386px;width:38px;height:23px;box-sizing:border-box;border:1px solid #d2d2d2;background:#f0f0f0"><div style="position:absolute;left:0;top:0;right:0;bottom:0;border:1px solid #fcfcfc"></div></div>

 <div class="t" style="left:11.09px;top:420px;font-size:11px;color:#000;transform:scaleX(1.0003);transform-origin:0 0;">Group by :</div>
 <div class="combo" style="left:136px;top:415px;width:201px;height:21px;background:#e1e1e1;border-color:#adadad"></div>
 <div class="t" style="left:139.43px;top:419px;font-size:11px;color:#000;transform:scaleX(0.9580);transform-origin:0 0;">Japanese KanJi by Hiragana</div>
 <svg class="abs" style="left:324px;top:423px" width="9" height="5" viewBox="0 0 9 5"><path d="M0.5 0.5L4.5 4.5L8.5 0.5" stroke="#444" stroke-width="1" fill="none"/></svg>

 <div class="t" style="left:11.05px;top:451px;font-size:11px;color:#000;transform:scaleX(1.0145);transform-origin:0 0;">Search for :</div>
 <div class="abs" style="left:136px;top:444px;width:204px;height:23px;box-sizing:border-box;border:1px solid #7a7a7a;background:#fff"></div>
 <div class="btn dis" style="left:356px;top:445px;width:73px;height:21px"></div>
 <div class="t" style="left:374.68px;top:449px;font-size:11px;color:#838383;transform:scaleX(0.9810);transform-origin:0 0;">Search</div>

 <!-- status bar -->
 <div class="abs" style="left:7px;top:473px;width:461px;height:20px;box-sizing:border-box;border-top:1px solid #a0a0a0;border-left:1px solid #a0a0a0;border-right:1px solid #fff;border-bottom:1px solid #fff"></div>
 <div class="t" style="left:12.24px;top:474px;font-size:11px;color:#000;transform:scaleX(0.9471);transform-origin:0 0;">U+674F (0x88C7): CJK Ideograph</div>
</div>

<div class="abs" style="left:475px;top:279px;width:2px;height:216px;background:#161718"></div>
<!-- Group By window -->
<div id="gb">
 <div id="gbc"></div>
 <svg class="abs" style="left:11px;top:9px" width="15" height="13" viewBox="0 0 15 13"><path d="M1 0.5H14" stroke="#0b6a30" stroke-width="1" stroke-dasharray="2 1"/><rect y="1" width="15" height="12" fill="#efeaf0"/><rect x="2" y="3" width="5" height="8" fill="#6fae93"/><rect x="2" y="3" width="5" height="2.4" fill="#8d90c2"/><rect x="7" y="3" width="4.5" height="8.5" fill="#e2e2e4"/><rect x="12" y="3" width="2" height="4" fill="#a9c4e6"/></svg>
 <svg class="abs" style="left:148px;top:11px" width="11" height="11" viewBox="0 0 11 11"><path d="M0.5 0.5L10.5 10.5M10.5 0.5L0.5 10.5" stroke="#fff" stroke-width="1.3" fill="none"/></svg>
</div>
<div class="t" style="left:507.85px;top:10px;font-size:12px;color:#fff;transform:scaleX(0.9747);transform-origin:0 0;">Group By</div>
<div class="t" style="left:481.62px;top:37px;font-size:12px;color:#000;transform:scaleX(1.0224);transform-origin:0 0;">Japanese KanJi by Hiragana</div>
<svg class="abs" style="left:505px;top:53px" width="111" height="221" viewBox="0 0 111 221">
<defs><pattern id="dz" width="2" height="2" patternUnits="userSpaceOnUse"><rect width="2" height="2" fill="#fff"/><rect width="1" height="1" fill="#000"/><rect x="1" y="1" width="1" height="1" fill="#000"/></pattern></defs>
<rect x="0" y="0" width="111" height="221" fill="#fff"/>
<path d="M0.5 0V221M22.5 0V221M44.5 0V221M66.5 0V221M88.5 0V221M110.5 0V221M0 0.5H111M0 22.5H111M0 44.5H111M0 66.5H111M0 88.5H111M0 110.5H111M0 132.5H111M0 154.5H111M0 176.5H111M0 198.5H111M0 220.5H111" stroke="#8a8a8a" stroke-width="1" fill="none" shape-rendering="crispEdges"/>
<path d="M0 0H22V22H0Z M3 3V19H19V3Z" fill="url(#dz)" fill-rule="evenodd" shape-rendering="crispEdges"/>
<g fill="#000" shape-rendering="crispEdges">
<path d="M9 5h1v1h-1zM8 6h1v1h-1zM12 6h2v1h-2zM5 7h7v1h-7zM8 8h1v1h-1zM8 9h1v1h-1zM12 9h1v1h-1zM8 10h6v1h-6zM7 11h2v1h-2zM10 11h1v1h-1zM14 11h1v1h-1zM6 12h1v1h-1zM8 12h1v1h-1zM10 12h1v1h-1zM15 12h1v1h-1zM5 13h1v1h-1zM8 13h3v1h-3zM15 13h1v1h-1zM5 14h1v1h-1zM8 14h1v1h-1zM15 14h1v1h-1zM5 15h1v1h-1zM8 15h1v1h-1zM15 15h1v1h-1zM5 16h4v1h-4zM13 16h2v1h-2zM11 17h2v1h-2z"/>
<path d="M27 7h1v1h-1zM27 8h1v1h-1zM34 8h1v1h-1zM27 9h1v1h-1zM35 9h1v1h-1zM27 10h1v1h-1zM36 10h1v1h-1zM27 11h1v1h-1zM37 11h1v1h-1zM27 12h1v1h-1zM37 12h1v1h-1zM28 13h1v1h-1zM31 13h1v1h-1zM37 13h1v1h-1zM28 14h1v1h-1zM31 14h1v1h-1zM29 15h1v1h-1zM31 15h1v1h-1zM30 16h1v1h-1z"/>
<path d="M52 5h2v1h-2zM54 6h2v1h-2zM54 8h2v1h-2zM51 9h3v1h-3zM56 9h1v1h-1zM50 10h1v1h-1zM57 10h1v1h-1zM57 11h1v1h-1zM57 12h1v1h-1zM57 13h1v1h-1zM57 14h1v1h-1zM56 15h1v1h-1zM55 16h1v1h-1zM53 17h2v1h-2z"/>
<path d="M74 5h2v1h-2zM76 6h2v1h-2zM77 8h1v1h-1zM72 9h5v1h-5zM76 10h1v1h-1zM76 11h1v1h-1zM75 12h1v1h-1zM75 13h3v1h-3zM74 14h1v1h-1zM77 14h1v1h-1zM73 15h1v1h-1zM77 15h1v1h-1zM72 16h1v1h-1zM77 16h5v1h-5zM71 17h1v1h-1zM80 17h1v1h-1z"/>
<path d="M96 5h1v1h-1zM96 6h1v1h-1zM101 6h1v1h-1zM96 7h1v1h-1zM99 7h1v1h-1zM102 7h1v1h-1zM93 8h6v1h-6zM103 8h1v1h-1zM96 9h1v1h-1zM96 10h1v1h-1zM96 11h6v1h-6zM95 12h2v1h-2zM102 12h1v1h-1zM94 13h1v1h-1zM96 13h1v1h-1zM103 13h1v1h-1zM93 14h1v1h-1zM96 14h1v1h-1zM103 14h1v1h-1zM93 15h1v1h-1zM96 15h1v1h-1zM102 15h1v1h-1zM93 16h4v1h-4zM98 16h4v1h-4z"/>
<path d="M8 27h1v1h-1zM8 28h1v1h-1zM8 29h1v1h-1zM13 29h1v1h-1zM8 30h3v1h-3zM14 30h1v1h-1zM5 31h4v1h-4zM11 31h1v1h-1zM15 31h1v1h-1zM7 32h1v1h-1zM11 32h1v1h-1zM15 32h1v1h-1zM7 33h1v1h-1zM11 33h1v1h-1zM16 33h1v1h-1zM7 34h1v1h-1zM11 34h1v1h-1zM16 34h1v1h-1zM6 35h1v1h-1zM11 35h1v1h-1zM6 36h1v1h-1zM11 36h1v1h-1zM6 37h1v1h-1zM8 37h1v1h-1zM11 37h1v1h-1zM5 38h1v1h-1zM9 38h3v1h-3z"/>
<path d="M31 27h1v1h-1zM31 28h1v1h-1zM34 28h2v1h-2zM28 29h6v1h-6zM32 30h1v1h-1zM36 30h1v1h-1zM32 31h4v1h-4zM27 32h7v1h-7zM34 33h1v1h-1zM34 34h1v1h-1zM33 35h3v1h-3zM28 36h1v1h-1zM29 37h1v1h-1zM30 38h2v1h-2zM32 39h3v1h-3z"/>
<path d="M55 27h1v1h-1zM55 28h1v1h-1zM54 29h1v1h-1zM53 30h1v1h-1zM52 31h1v1h-1zM51 32h1v1h-1zM51 33h1v1h-1zM52 34h1v1h-1zM53 35h1v1h-1zM54 36h1v1h-1zM55 37h1v1h-1zM56 38h1v1h-1zM56 39h1v1h-1z"/>
<path d="M72 27h1v1h-1zM79 27h1v1h-1zM72 28h1v1h-1zM79 28h1v1h-1zM72 29h1v1h-1zM79 29h1v1h-1zM71 30h1v1h-1zM74 30h1v1h-1zM79 30h4v1h-4zM71 31h1v1h-1zM75 31h5v1h-5zM71 32h1v1h-1zM79 32h1v1h-1zM71 33h1v1h-1zM79 33h1v1h-1zM71 34h1v1h-1zM73 34h1v1h-1zM79 34h1v1h-1zM71 35h1v1h-1zM73 35h1v1h-1zM79 35h1v1h-1zM72 36h1v1h-1zM79 36h1v1h-1zM72 37h1v1h-1zM78 37h1v1h-1zM72 38h1v1h-1zM78 38h1v1h-1zM76 39h2v1h-2z"/>
<path d="M95 28h1v1h-1zM98 28h4v1h-4zM96 29h2v1h-2zM99 29h1v1h-1zM98 30h1v1h-1zM95 34h1v1h-1zM94 35h1v1h-1zM94 36h1v1h-1zM95 37h1v1h-1zM96 38h7v1h-7z"/>
<path d="M9 49h1v1h-1zM10 50h1v1h-1zM10 51h5v1h-5zM5 52h7v1h-7zM11 53h1v1h-1zM12 54h1v1h-1zM12 55h1v1h-1zM10 56h4v1h-4zM6 57h1v1h-1zM6 58h1v1h-1zM7 59h1v1h-1zM8 60h5v1h-5z"/>
<path d="M29 49h1v1h-1zM29 50h1v1h-1zM29 51h1v1h-1zM29 52h1v1h-1zM29 53h1v1h-1zM29 54h1v1h-1zM29 55h1v1h-1zM29 56h1v1h-1zM29 57h1v1h-1zM36 57h1v1h-1zM29 58h1v1h-1zM36 58h1v1h-1zM29 59h1v1h-1zM36 59h1v1h-1zM30 60h1v1h-1zM34 60h2v1h-2zM31 61h3v1h-3z"/>
<path d="M55 49h1v1h-1zM55 50h1v1h-1zM48 51h12v1h-12zM55 52h1v1h-1zM55 53h1v1h-1zM53 54h3v1h-3zM52 55h1v1h-1zM55 55h1v1h-1zM51 56h1v1h-1zM55 56h1v1h-1zM52 57h1v1h-1zM55 57h1v1h-1zM53 58h3v1h-3zM54 59h1v1h-1zM54 60h1v1h-1zM51 61h3v1h-3z"/>
<path d="M78 49h1v1h-1zM73 50h1v1h-1zM78 50h1v1h-1zM73 51h1v1h-1zM78 51h1v1h-1zM73 52h1v1h-1zM78 52h1v1h-1zM70 53h13v1h-13zM73 54h1v1h-1zM78 54h1v1h-1zM73 55h1v1h-1zM78 55h1v1h-1zM73 56h1v1h-1zM76 56h1v1h-1zM78 56h1v1h-1zM73 57h1v1h-1zM77 57h1v1h-1zM73 58h1v1h-1zM73 59h1v1h-1zM73 60h7v1h-7zM80 61h1v1h-1z"/>
<path d="M100 49h1v1h-1zM95 50h5v1h-5zM99 51h1v1h-1zM98 52h1v1h-1zM97 53h1v1h-1zM102 53h2v1h-2zM94 54h8v1h-8zM93 55h1v1h-1zM98 55h1v1h-1zM98 56h1v1h-1zM97 57h1v1h-1zM97 58h1v1h-1zM97 59h1v1h-1zM98 60h1v1h-1zM99 61h3v1h-3z"/>
<path d="M8 71h1v1h-1zM8 72h1v1h-1zM4 73h1v1h-1zM8 73h4v1h-4zM5 74h4v1h-4zM7 75h1v1h-1zM7 76h1v1h-1zM10 76h5v1h-5zM7 77h1v1h-1zM7 78h1v1h-1zM6 79h1v1h-1zM10 79h1v1h-1zM6 80h1v1h-1zM10 80h1v1h-1zM6 81h1v1h-1zM10 81h1v1h-1zM5 82h1v1h-1zM11 82h5v1h-5z"/>
<path d="M30 71h1v1h-1zM30 72h1v1h-1zM35 72h1v1h-1zM26 73h9v1h-9zM30 74h1v1h-1zM30 75h1v1h-1zM29 76h1v1h-1zM29 77h1v1h-1zM32 77h5v1h-5zM29 78h3v1h-3zM36 78h1v1h-1zM36 79h2v1h-2zM36 80h1v1h-1zM36 81h1v1h-1zM30 82h1v1h-1zM33 82h3v1h-3zM31 83h2v1h-2z"/>
<path d="M53 73h4v1h-4zM49 74h4v1h-4zM57 74h1v1h-1zM58 75h1v1h-1zM59 76h1v1h-1zM59 77h1v1h-1zM59 78h1v1h-1zM58 79h1v1h-1zM57 80h1v1h-1zM52 81h5v1h-5z"/>
<path d="M76 72h6v1h-6zM70 73h7v1h-7zM76 74h1v1h-1zM76 75h1v1h-1zM75 76h1v1h-1zM75 77h1v1h-1zM74 78h1v1h-1zM74 79h1v1h-1zM75 80h1v1h-1zM76 81h1v1h-1zM77 82h3v1h-3z"/>
<path d="M96 71h1v1h-1zM96 72h1v1h-1zM96 73h1v1h-1zM97 74h1v1h-1zM97 75h1v1h-1zM100 75h2v1h-2zM97 76h3v1h-3zM96 77h1v1h-1zM95 78h1v1h-1zM94 79h1v1h-1zM94 80h1v1h-1zM94 81h1v1h-1zM95 82h8v1h-8z"/>
<path d="M9 92h1v1h-1zM8 93h1v1h-1zM8 94h1v1h-1zM4 95h1v1h-1zM8 95h4v1h-4zM5 96h3v1h-3zM7 97h1v1h-1zM7 98h1v1h-1zM12 98h1v1h-1zM6 99h1v1h-1zM12 99h1v1h-1zM6 100h1v1h-1zM12 100h1v1h-1zM5 101h1v1h-1zM12 101h1v1h-1zM5 102h1v1h-1zM9 102h5v1h-5zM8 103h1v1h-1zM12 103h1v1h-1zM14 103h1v1h-1zM9 104h1v1h-1zM12 104h1v1h-1zM15 104h1v1h-1zM10 105h3v1h-3z"/>
<path d="M28 94h1v1h-1zM28 95h1v1h-1zM32 95h5v1h-5zM28 96h1v1h-1zM27 97h1v1h-1zM27 98h1v1h-1zM27 99h1v1h-1zM27 100h1v1h-1zM29 100h1v1h-1zM27 101h1v1h-1zM29 101h1v1h-1zM32 101h1v1h-1zM28 102h1v1h-1zM31 102h2v1h-2zM28 103h1v1h-1zM32 103h1v1h-1zM28 104h1v1h-1zM33 104h5v1h-5z"/>
<path d="M55 93h1v1h-1zM49 94h1v1h-1zM54 94h1v1h-1zM49 95h1v1h-1zM54 95h3v1h-3zM49 96h6v1h-6zM57 96h1v1h-1zM50 97h1v1h-1zM54 97h1v1h-1zM58 97h1v1h-1zM50 98h1v1h-1zM54 98h1v1h-1zM59 98h1v1h-1zM49 99h1v1h-1zM51 99h1v1h-1zM53 99h1v1h-1zM59 99h1v1h-1zM49 100h1v1h-1zM51 100h1v1h-1zM53 100h1v1h-1zM59 100h1v1h-1zM48 101h1v1h-1zM52 101h1v1h-1zM56 101h1v1h-1zM59 101h1v1h-1zM48 102h1v1h-1zM52 102h1v1h-1zM55 102h1v1h-1zM57 102h3v1h-3zM48 103h4v1h-4zM54 103h1v1h-1zM58 103h1v1h-1zM50 104h1v1h-1zM55 104h3v1h-3z"/>
<path d="M73 93h1v1h-1zM73 94h1v1h-1zM73 95h1v1h-1zM78 95h1v1h-1zM70 96h4v1h-4zM76 96h2v1h-2zM79 96h1v1h-1zM73 97h1v1h-1zM75 97h1v1h-1zM80 97h1v1h-1zM73 98h2v1h-2zM81 98h1v1h-1zM73 99h1v1h-1zM81 99h1v1h-1zM73 100h1v1h-1zM81 100h1v1h-1zM72 101h2v1h-2zM78 101h1v1h-1zM81 101h1v1h-1zM71 102h1v1h-1zM73 102h1v1h-1zM77 102h1v1h-1zM79 102h3v1h-3zM70 103h1v1h-1zM73 103h1v1h-1zM76 103h1v1h-1zM80 103h2v1h-2zM73 104h1v1h-1zM77 104h4v1h-4zM82 104h1v1h-1zM73 105h1v1h-1z"/>
<path d="M97 94h4v1h-4zM95 95h2v1h-2zM98 95h1v1h-1zM101 95h1v1h-1zM94 96h1v1h-1zM98 96h1v1h-1zM102 96h1v1h-1zM93 97h1v1h-1zM98 97h1v1h-1zM103 97h1v1h-1zM93 98h1v1h-1zM98 98h1v1h-1zM103 98h1v1h-1zM93 99h1v1h-1zM97 99h1v1h-1zM103 99h1v1h-1zM92 100h1v1h-1zM97 100h1v1h-1zM103 100h1v1h-1zM93 101h1v1h-1zM97 101h1v1h-1zM103 101h1v1h-1zM93 102h1v1h-1zM96 102h1v1h-1zM103 102h1v1h-1zM93 103h3v1h-3zM101 103h2v1h-2zM98 104h3v1h-3z"/>
<path d="M6 115h1v1h-1zM12 115h1v1h-1zM6 116h1v1h-1zM13 116h1v1h-1zM5 117h1v1h-1zM13 117h1v1h-1zM15 117h1v1h-1zM5 118h1v1h-1zM8 118h7v1h-7zM5 119h1v1h-1zM13 119h1v1h-1zM5 120h1v1h-1zM13 120h1v1h-1zM5 121h1v1h-1zM13 121h1v1h-1zM5 122h1v1h-1zM7 122h1v1h-1zM13 122h1v1h-1zM5 123h2v1h-2zM10 123h4v1h-4zM5 124h1v1h-1zM9 124h1v1h-1zM13 124h2v1h-2zM5 125h1v1h-1zM9 125h1v1h-1zM13 125h1v1h-1zM15 125h2v1h-2zM5 126h1v1h-1zM9 126h4v1h-4z"/>
<path d="M29 117h1v1h-1zM34 117h1v1h-1zM26 118h3v1h-3zM30 118h1v1h-1zM35 118h1v1h-1zM29 119h1v1h-1zM35 119h1v1h-1zM29 120h1v1h-1zM35 120h2v1h-2zM28 121h1v1h-1zM35 121h1v1h-1zM37 121h1v1h-1zM28 122h1v1h-1zM35 122h1v1h-1zM38 122h1v1h-1zM28 123h1v1h-1zM35 123h1v1h-1zM28 124h1v1h-1zM35 124h1v1h-1zM28 125h1v1h-1zM34 125h1v1h-1zM29 126h1v1h-1zM33 126h1v1h-1zM30 127h3v1h-3z"/>
<path d="M52 115h1v1h-1zM53 116h2v1h-2zM55 117h1v1h-1zM53 119h1v1h-1zM53 120h1v1h-1zM50 121h1v1h-1zM54 121h1v1h-1zM57 121h1v1h-1zM50 122h1v1h-1zM55 122h1v1h-1zM58 122h1v1h-1zM49 123h1v1h-1zM55 123h1v1h-1zM59 123h1v1h-1zM49 124h1v1h-1zM55 124h1v1h-1zM60 124h1v1h-1zM48 125h1v1h-1zM51 125h1v1h-1zM55 125h2v1h-2zM52 126h1v1h-1zM55 126h1v1h-1zM53 127h2v1h-2z"/>
<path d="M75 118h1v1h-1zM74 119h2v1h-2zM73 120h1v1h-1zM76 120h2v1h-2zM72 121h1v1h-1zM78 121h1v1h-1zM70 122h2v1h-2zM79 122h1v1h-1zM80 123h2v1h-2z"/>
<path d="M94 115h1v1h-1zM94 116h1v1h-1zM97 116h7v1h-7zM93 117h1v1h-1zM100 117h1v1h-1zM93 118h1v1h-1zM100 118h1v1h-1zM93 119h1v1h-1zM96 119h8v1h-8zM93 120h1v1h-1zM100 120h1v1h-1zM93 121h1v1h-1zM101 121h1v1h-1zM93 122h1v1h-1zM101 122h1v1h-1zM93 123h1v1h-1zM99 123h3v1h-3zM93 124h1v1h-1zM97 124h2v1h-2zM101 124h1v1h-1zM93 125h2v1h-2zM96 125h1v1h-1zM101 125h4v1h-4zM93 126h1v1h-1zM97 126h5v1h-5zM99 127h1v1h-1z"/>
<path d="M10 137h1v1h-1zM10 138h1v1h-1zM15 138h1v1h-1zM6 139h9v1h-9zM10 140h1v1h-1zM11 141h1v1h-1zM14 141h1v1h-1zM6 142h8v1h-8zM11 143h1v1h-1zM11 144h1v1h-1zM8 145h4v1h-4zM7 146h1v1h-1zM11 146h2v1h-2zM6 147h1v1h-1zM11 147h1v1h-1zM13 147h1v1h-1zM7 148h1v1h-1zM10 148h1v1h-1zM14 148h1v1h-1zM8 149h2v1h-2z"/>
<path d="M28 138h5v1h-5zM32 139h1v1h-1zM32 140h1v1h-1zM35 140h1v1h-1zM32 141h1v1h-1zM36 141h1v1h-1zM31 142h1v1h-1zM36 142h1v1h-1zM29 143h6v1h-6zM36 143h1v1h-1zM28 144h1v1h-1zM30 144h1v1h-1zM35 144h2v1h-2zM27 145h1v1h-1zM30 145h1v1h-1zM35 145h1v1h-1zM37 145h2v1h-2zM26 146h1v1h-1zM30 146h1v1h-1zM35 146h1v1h-1zM27 147h3v1h-3zM34 147h1v1h-1zM28 148h1v1h-1zM34 148h1v1h-1zM32 149h2v1h-2z"/>
<path d="M52 137h1v1h-1zM51 138h1v1h-1zM48 139h7v1h-7zM57 139h1v1h-1zM51 140h1v1h-1zM58 140h1v1h-1zM51 141h1v1h-1zM59 141h1v1h-1zM49 142h3v1h-3zM60 142h1v1h-1zM49 143h1v1h-1zM51 143h1v1h-1zM49 144h1v1h-1zM51 144h1v1h-1zM57 144h1v1h-1zM48 145h2v1h-2zM51 145h1v1h-1zM58 145h1v1h-1zM49 146h3v1h-3zM58 146h1v1h-1zM51 147h1v1h-1zM58 147h1v1h-1zM52 148h1v1h-1zM56 148h2v1h-2zM53 149h3v1h-3z"/>
<path d="M77 137h1v1h-1zM72 138h1v1h-1zM77 138h1v1h-1zM72 139h1v1h-1zM77 139h1v1h-1zM72 140h5v1h-5zM78 140h2v1h-2zM73 141h1v1h-1zM76 141h1v1h-1zM80 141h1v1h-1zM71 142h3v1h-3zM76 142h1v1h-1zM81 142h1v1h-1zM71 143h1v1h-1zM73 143h1v1h-1zM76 143h1v1h-1zM81 143h1v1h-1zM71 144h1v1h-1zM73 144h3v1h-3zM81 144h1v1h-1zM70 145h1v1h-1zM74 145h2v1h-2zM81 145h1v1h-1zM70 146h1v1h-1zM74 146h2v1h-2zM81 146h1v1h-1zM70 147h4v1h-4zM75 147h1v1h-1zM80 147h1v1h-1zM72 148h1v1h-1zM77 148h3v1h-3z"/>
<path d="M97 137h1v1h-1zM97 138h1v1h-1zM96 139h1v1h-1zM100 139h1v1h-1zM93 140h7v1h-7zM96 141h1v1h-1zM96 142h1v1h-1zM93 143h8v1h-8zM96 144h1v1h-1zM102 144h1v1h-1zM96 145h1v1h-1zM102 145h1v1h-1zM96 146h1v1h-1zM102 146h1v1h-1zM96 147h1v1h-1zM102 147h1v1h-1zM97 148h1v1h-1zM102 148h1v1h-1zM98 149h4v1h-4z"/>
<path d="M9 159h2v1h-2zM6 160h1v1h-1zM11 160h1v1h-1zM7 161h1v1h-1zM7 162h1v1h-1zM10 162h6v1h-6zM7 163h3v1h-3zM15 163h1v1h-1zM4 164h5v1h-5zM15 164h1v1h-1zM8 165h1v1h-1zM15 165h1v1h-1zM9 166h1v1h-1zM11 166h4v1h-4zM9 167h1v1h-1zM9 168h1v1h-1zM9 169h1v1h-1zM10 170h1v1h-1zM10 171h1v1h-1z"/>
<path d="M55 159h1v1h-1zM49 160h1v1h-1zM55 160h1v1h-1zM49 161h1v1h-1zM54 161h4v1h-4zM49 162h1v1h-1zM53 162h1v1h-1zM55 162h1v1h-1zM58 162h1v1h-1zM49 163h1v1h-1zM52 163h1v1h-1zM55 163h1v1h-1zM59 163h1v1h-1zM49 164h1v1h-1zM51 164h1v1h-1zM55 164h1v1h-1zM59 164h1v1h-1zM49 165h2v1h-2zM55 165h1v1h-1zM59 165h1v1h-1zM49 166h1v1h-1zM55 166h1v1h-1zM59 166h1v1h-1zM49 167h1v1h-1zM53 167h1v1h-1zM55 167h1v1h-1zM59 167h1v1h-1zM49 168h1v1h-1zM54 168h5v1h-5zM49 169h1v1h-1zM55 169h1v1h-1zM54 170h1v1h-1zM53 171h1v1h-1z"/>
<path d="M98 159h1v1h-1zM98 160h1v1h-1zM98 161h1v1h-1zM98 162h5v1h-5zM98 163h1v1h-1zM98 164h1v1h-1zM98 165h1v1h-1zM98 166h1v1h-1zM95 167h4v1h-4zM94 168h1v1h-1zM98 168h3v1h-3zM93 169h1v1h-1zM98 169h1v1h-1zM101 169h2v1h-2zM94 170h1v1h-1zM98 170h1v1h-1zM95 171h3v1h-3z"/>
<path d="M8 181h2v1h-2zM10 182h1v1h-1zM7 183h1v1h-1zM11 183h1v1h-1zM7 184h1v1h-1zM7 185h1v1h-1zM7 186h1v1h-1zM6 187h1v1h-1zM10 187h5v1h-5zM6 188h1v1h-1zM8 188h2v1h-2zM14 188h1v1h-1zM7 189h1v1h-1zM14 189h1v1h-1zM14 190h1v1h-1zM14 191h1v1h-1zM8 192h1v1h-1zM12 192h2v1h-2zM9 193h3v1h-3z"/>
<path d="M29 181h1v1h-1zM35 181h1v1h-1zM29 182h1v1h-1zM35 182h1v1h-1zM28 183h1v1h-1zM35 183h1v1h-1zM28 184h1v1h-1zM35 184h1v1h-1zM28 185h1v1h-1zM31 185h1v1h-1zM35 185h1v1h-1zM28 186h1v1h-1zM31 186h1v1h-1zM35 186h1v1h-1zM28 187h1v1h-1zM31 187h1v1h-1zM35 187h1v1h-1zM29 188h2v1h-2zM35 188h1v1h-1zM35 189h1v1h-1zM34 190h1v1h-1zM34 191h1v1h-1zM33 192h1v1h-1zM31 193h2v1h-2z"/>
<path d="M51 182h4v1h-4zM55 183h1v1h-1zM54 184h1v1h-1zM53 185h1v1h-1zM53 186h3v1h-3zM52 187h1v1h-1zM56 187h3v1h-3zM51 188h1v1h-1zM58 188h1v1h-1zM49 189h2v1h-2zM58 189h1v1h-1zM52 190h3v1h-3zM58 190h1v1h-1zM51 191h1v1h-1zM55 191h1v1h-1zM58 191h1v1h-1zM52 192h1v1h-1zM55 192h3v1h-3zM53 193h3v1h-3z"/>
<path d="M73 181h1v1h-1zM73 182h1v1h-1zM73 183h1v1h-1zM78 183h1v1h-1zM70 184h4v1h-4zM76 184h2v1h-2zM79 184h1v1h-1zM73 185h1v1h-1zM75 185h1v1h-1zM79 185h1v1h-1zM73 186h2v1h-2zM79 186h1v1h-1zM73 187h1v1h-1zM79 187h1v1h-1zM73 188h1v1h-1zM79 188h1v1h-1zM71 189h3v1h-3zM79 189h1v1h-1zM71 190h1v1h-1zM73 190h1v1h-1zM79 190h1v1h-1zM82 190h1v1h-1zM71 191h1v1h-1zM73 191h1v1h-1zM79 191h1v1h-1zM82 191h1v1h-1zM73 192h1v1h-1zM79 192h3v1h-3zM73 193h1v1h-1z"/>
<path d="M95 182h6v1h-6zM99 183h1v1h-1zM99 184h1v1h-1zM98 185h1v1h-1zM97 186h1v1h-1zM99 186h2v1h-2zM96 187h3v1h-3zM101 187h1v1h-1zM95 188h1v1h-1zM102 188h1v1h-1zM94 189h1v1h-1zM103 189h1v1h-1zM103 190h1v1h-1zM102 191h1v1h-1zM96 192h1v1h-1zM100 192h2v1h-2zM97 193h3v1h-3z"/>
<path d="M8 203h1v1h-1zM7 204h1v1h-1zM7 205h1v1h-1zM5 206h4v1h-4zM12 206h1v1h-1zM7 207h1v1h-1zM9 207h3v1h-3zM13 207h2v1h-2zM7 208h2v1h-2zM15 208h1v1h-1zM7 209h1v1h-1zM15 209h1v1h-1zM7 210h1v1h-1zM15 210h1v1h-1zM6 211h2v1h-2zM15 211h1v1h-1zM4 212h2v1h-2zM7 212h1v1h-1zM15 212h1v1h-1zM7 213h1v1h-1zM14 213h1v1h-1zM7 214h1v1h-1zM10 214h4v1h-4zM7 215h1v1h-1z"/>
</g></svg>
</body></html>
